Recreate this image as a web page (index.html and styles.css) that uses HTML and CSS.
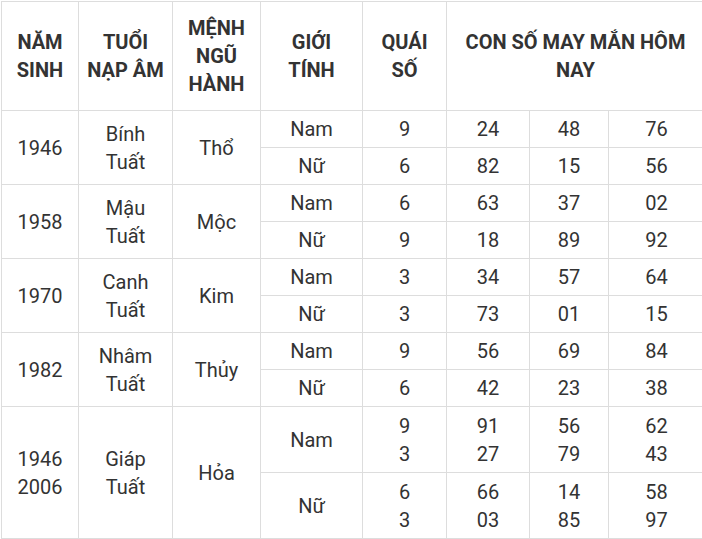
FILE: index.html
```html
<!DOCTYPE html>
<html lang="vi">
<head>
<meta charset="utf-8">
<title>Con số may mắn</title>
<link rel="stylesheet" href="styles.css">
</head>
<body>
<table class="lucky">
  <colgroup>
    <col class="c1"><col class="c2"><col class="c3"><col class="c4"><col class="c5"><col class="c6"><col class="c7"><col class="c8">
  </colgroup>
  <thead>
    <tr>
      <th>NĂM<br>SINH</th>
      <th>TUỔI<br>NẠP ÂM</th>
      <th>MỆNH<br>NGŨ<br>HÀNH</th>
      <th>GIỚI<br>TÍNH</th>
      <th>QUÁI<br>SỐ</th>
      <th colspan="3">CON SỐ MAY MẮN HÔM<br>NAY</th>
    </tr>
  </thead>
  <tbody>
    <tr><td rowspan="2">1946</td><td rowspan="2">Bính<br>Tuất</td><td rowspan="2">Thổ</td><td>Nam</td><td>9</td><td>24</td><td>48</td><td>76</td></tr>
    <tr><td>Nữ</td><td>6</td><td>82</td><td>15</td><td>56</td></tr>
    <tr><td rowspan="2">1958</td><td rowspan="2">Mậu<br>Tuất</td><td rowspan="2">Mộc</td><td>Nam</td><td>6</td><td>63</td><td>37</td><td>02</td></tr>
    <tr><td>Nữ</td><td>9</td><td>18</td><td>89</td><td>92</td></tr>
    <tr><td rowspan="2">1970</td><td rowspan="2">Canh<br>Tuất</td><td rowspan="2">Kim</td><td>Nam</td><td>3</td><td>34</td><td>57</td><td>64</td></tr>
    <tr><td>Nữ</td><td>3</td><td>73</td><td>01</td><td>15</td></tr>
    <tr><td rowspan="2">1982</td><td rowspan="2">Nhâm<br>Tuất</td><td rowspan="2">Thủy</td><td>Nam</td><td>9</td><td>56</td><td>69</td><td>84</td></tr>
    <tr><td>Nữ</td><td>6</td><td>42</td><td>23</td><td>38</td></tr>
    <tr class="tall"><td rowspan="2">1946<br>2006</td><td rowspan="2">Giáp<br>Tuất</td><td rowspan="2">Hỏa</td><td>Nam</td><td>9<br>3</td><td>91<br>27</td><td>56<br>79</td><td>62<br>43</td></tr>
    <tr class="tall"><td>Nữ</td><td>6<br>3</td><td>66<br>03</td><td>14<br>85</td><td>58<br>97</td></tr>
  </tbody>
</table>
</body>
</html>
```

FILE: styles.css
```css
html, body {
  margin: 0;
  padding: 0;
  overflow: hidden;
  background: #ffffff;
}
body {
  padding: 1px 0 0 1px;
  font-family: Roboto, "Liberation Sans", Arial, sans-serif;
  color: #333333;
}
.lucky {
  border-collapse: collapse;
  table-layout: fixed;
  width: 704px;
  font-size: 20px;
  line-height: 28px;
}
.c1 { width: 77px; }
.c2 { width: 94px; }
.c3 { width: 88px; }
.c4 { width: 102px; }
.c5 { width: 84px; }
.c6 { width: 83px; }
.c7 { width: 79px; }
.c8 { width: 96px; }
.lucky th,
.lucky td {
  border: 1px solid #dddddd;
  text-align: center;
  vertical-align: middle;
  padding: 4px 2px;
}
.lucky th {
  font-weight: 700;
  color: #333333;
  padding: 12px 2px;
}
.lucky td {
  font-weight: 400;
}
.lucky .tall td {
  height: 57px;
}
```
